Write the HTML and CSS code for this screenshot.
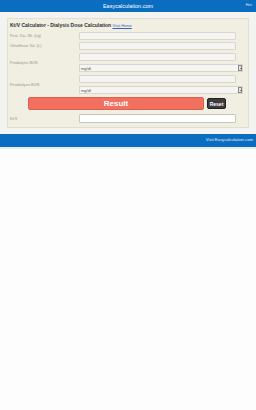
FILE: index.html
```html
<!DOCTYPE html>
<html>
<head>
<meta charset="utf-8">
<link rel="stylesheet" href="styles.css">
</head>
<body>
<div class="topbar"><span class="brand">Easycalculation.com</span><span class="hex">Hex</span></div>
<div class="wrap">
  <div class="panel">
    <div class="title"><b>Kt/V Calculator - Dialysis Dose Calculation</b> <a class="home">Visit Home</a></div>
    <div class="row r1"><span class="lbl">Post. Dia. Wt. (kg)</span><div class="fields"><div class="inp"></div></div></div>
    <div class="row r2"><span class="lbl">Ultrafiltrate Vol. (L)</span><div class="fields"><div class="inp"></div></div></div>
    <div class="row r3"><span class="lbl">Predialysis BUN</span><div class="fields"><div class="inp"></div><div class="sel"><span>mg/dl</span><i class="arr"></i></div></div></div>
    <div class="row r3"><span class="lbl">Postdialysis BUN</span><div class="fields"><div class="inp"></div><div class="sel"><span>mg/dl</span><i class="arr"></i></div></div></div>
    <div class="btns"><div class="result">Result</div><div class="reset">Reset</div></div>
    <div class="row r4"><span class="lbl">Kt/V</span><div class="fields"><div class="inp white"></div></div></div>
  </div>
</div>
<div class="footer"><span>Visit Easycalculation.com</span></div>
</body>
</html>
```
FILE: styles.css
```css
html, body { margin: 0; padding: 0; background: #fdfdfd; font-family: "Liberation Sans", Arial, sans-serif; }
.topbar { height: 12px; background: #0b6dbf; color: #fff; font-size: 5px; display: flex; align-items: center; justify-content: center; position: relative; }
.brand { font-size: 5.5px; }
.hex { position: absolute; right: 4px; top: 3px; font-size: 3.5px; color: #dfe9f5; }
.wrap { background: #f3f3f1; padding: 6px 7px 6px 7px; }
.panel { background: #f1eee2; border: 1px solid #e3dfcf; padding: 2px 12px 4px 2px; }
.title { font-size: 5px; color: #333; height: 8px; line-height: 8px; white-space: nowrap; }
.title b { color: #303030; }
.home { color: #3567b8; text-decoration: underline; font-size: 4px; }
.row { display: flex; align-items: center; }
.lbl { width: 69px; font-size: 3.8px; color: #9a9788; flex: none; }
.fields { flex: 1; display: flex; flex-direction: column; gap: 3px; }
.inp { height: 8px; background: #f5f4f0; border: 1px solid #d8d6ce; border-radius: 1px; box-sizing: border-box; }
.inp.white { height: 9px; background: #fff; border-color: #c9c7be; }
.r1 { margin-top: 3px; }
.r2 { margin-top: 2px; }
.r3 { margin-top: 3px; }
.sel { height: 8px; background: #f6f5f2; border: 1px solid #d8d6ce; box-sizing: border-box; font-size: 4px; color: #555; display: flex; align-items: center; padding-left: 1px; position: relative; margin-right: -7px; }
.sel span { flex: 1; }
.arr { width: 4px; height: 6px; border: 1px solid #888; background: #e8e8e8; box-sizing: border-box; position: relative; }
.arr::after { content: ""; position: absolute; left: 0.5px; top: 2px; border-left: 1px solid transparent; border-right: 1px solid transparent; border-top: 1.5px solid #333; }
.btns { display: flex; align-items: center; margin-top: 3px; padding-left: 18px; gap: 3px; }
.result { width: 176px; height: 13px; background: #f1705f; border: 1px solid #e06050; border-radius: 2px; box-sizing: border-box; color: #fff; font-weight: bold; font-size: 8px; display: flex; align-items: center; justify-content: center; }
.reset { background: #3c3c3c; color: #fff; font-weight: bold; font-size: 5px; height: 11px; width: 19px; border-radius: 2px; display: flex; align-items: center; justify-content: center; border: 0.5px solid #222; box-sizing: border-box; }
.r4 { margin-top: 4px; }
.footer { height: 13px; background: #0b6dbf; color: #fff; font-size: 4.2px; display: flex; justify-content: flex-end; align-items: center; padding: 0 3px; border-bottom: 2px solid #e6ebf0; }
.footer span { margin-top: -3px; color: #e6eef8; }
```
